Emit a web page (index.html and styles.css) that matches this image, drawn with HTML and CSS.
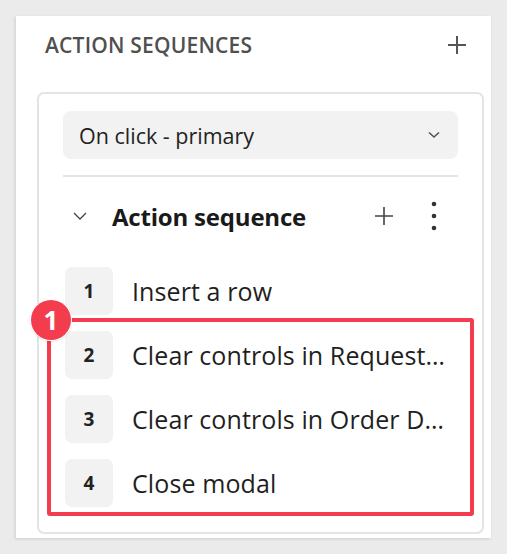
FILE: index.html
```html
<!DOCTYPE html>
<html>
<head>
<meta charset="utf-8">
<link rel="stylesheet" href="styles.css">
</head>
<body>
<div class="panel">
  <div class="panel-head">
    <span class="title">ACTION SEQUENCES</span>
    <svg class="icon-plus" width="18" height="18" viewBox="0 0 18 18"><path d="M9 0V18M0 9H18" stroke="#555" stroke-width="2"/></svg>
  </div>
  <div class="card">
    <div class="select">
      <span>On click - primary</span>
      <svg width="12" height="8" viewBox="0 0 12 8"><path d="M1 1.5L6 6L11 1.5" fill="none" stroke="#555" stroke-width="1.6"/></svg>
    </div>
    <div class="divider"></div>
    <div class="seq-head">
      <svg class="chev" width="14" height="9" viewBox="0 0 14 9"><path d="M1 1L7 7L13 1" fill="none" stroke="#444" stroke-width="1.3"/></svg>
      <span class="seq-title">Action sequence</span>
      <svg class="seq-plus" width="18" height="18" viewBox="0 0 18 18"><path d="M9 0V18M0 9H18" stroke="#444" stroke-width="1.6"/></svg>
      <svg class="kebab" width="6" height="30" viewBox="0 0 6 30"><circle cx="3" cy="3" r="2.3" fill="#333"/><circle cx="3" cy="15" r="2.3" fill="#333"/><circle cx="3" cy="27" r="2.3" fill="#333"/></svg>
    </div>
    <div class="list">
      <div class="item"><span class="num">1</span><span class="label">Insert a row</span></div>
      <div class="group">
        <div class="item"><span class="num">2</span><span class="label">Clear controls in Request…</span></div>
        <div class="item"><span class="num">3</span><span class="label">Clear controls in Order D…</span></div>
        <div class="item"><span class="num">4</span><span class="label">Close modal</span></div>
        <div class="highlight"></div>
        <span class="badge">1</span>
      </div>
    </div>
  </div>
</div>
</body>
</html>
```

FILE: styles.css
```css
* { box-sizing: border-box; }
html, body { margin: 0; padding: 0; }
body {
  width: 507px;
  height: 554px;
  background: #ebebeb;
  font-family: "Open Sans", "Noto Sans", sans-serif;
  color: #1f1f1f;
  padding: 16px 16px 0 16px;
  overflow: hidden;
}
.panel {
  width: 475px;
  height: 522px;
  background: #fff;
  box-shadow: -1px 1px 3px rgba(0,0,0,0.12);
  padding: 0 7px 0 21px;
}
.panel-head {
  height: 58px;
  display: flex;
  align-items: center;
  justify-content: space-between;
  padding: 0 18px 0 8px;
}
.title {
  font-size: 21px;
  font-weight: 600;
  color: #505050;
  letter-spacing: 0.2px;
}
.card {
  margin-top: 18px;
  border: 2px solid #e4e4e4;
  border-radius: 7px;
  height: 442px;
  padding: 17px 24px 0 24px;
}
.select {
  height: 48px;
  background: #f2f2f2;
  border-radius: 8px;
  display: flex;
  align-items: center;
  justify-content: space-between;
  padding: 0 18px 0 16px;
  font-size: 21.5px;
  color: #222;
}
.divider {
  height: 2px;
  background: #e4e4e4;
  margin-top: 16px;
}
.seq-head {
  height: 78px;
  display: flex;
  align-items: center;
  padding: 0 21px 0 10px;
}
.chev { margin-right: 25px; }
.seq-title {
  font-size: 24px;
  font-weight: 700;
  color: #1a1a1a;
  flex: 1;
  letter-spacing: -0.2px;
}
.seq-plus { margin-right: 38px; }
.list { display: flex; flex-direction: column; gap: 16px; padding: 12px 0 0 2px; }
.group { position: relative; display: flex; flex-direction: column; gap: 16px; }
.item {
  display: flex;
  align-items: center;
  height: 48px;
  gap: 19px;
}
.num {
  width: 48px;
  height: 48px;
  border-radius: 7px;
  background: #f2f2f2;
  display: flex;
  align-items: center;
  justify-content: center;
  font-weight: 700;
  font-size: 19px;
  color: #222;
  flex: none;
}
.label {
  font-size: 25px;
  color: #1f1f1f;
  white-space: nowrap;
  letter-spacing: 0.1px;
}
.highlight {
  position: absolute;
  left: -18px;
  top: -13px;
  width: 427px;
  height: 198px;
  border: 4px solid #f33d4f;
  border-radius: 3px;
}
.badge {
  position: absolute;
  left: -34px;
  top: -31px;
  width: 40px;
  height: 40px;
  border-radius: 50%;
  background: #f33d4f;
  color: #fff;
  font-weight: 700;
  font-size: 26px;
  display: flex;
  align-items: center;
  justify-content: center;
  box-shadow: 0 0 0 1px #fff, 0 1px 3px rgba(0,0,0,0.2);
}
```
